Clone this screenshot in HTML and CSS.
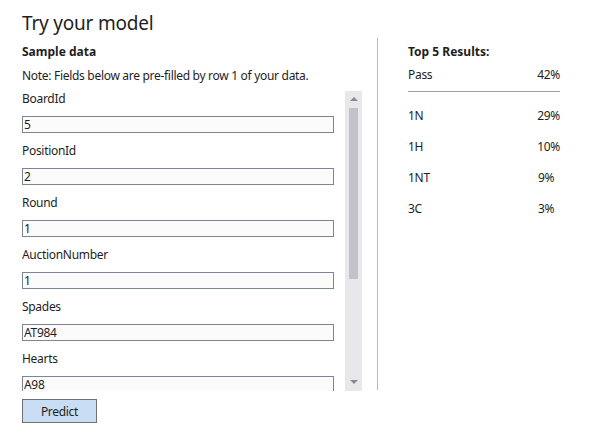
FILE: index.html
```html
<!DOCTYPE html>
<html lang="en">
<head>
<title>Try your model</title>
<meta charset="utf-8">
<link rel="stylesheet" href="styles.css">
</head>
<body>
	<div class="page">
		<div class="left">
			<h1 class="title">Try your model</h1>
			<h2 class="heading">Sample data</h2>
			<p class="note">Note: Fields below are pre-filled by row 1 of your data.</p>

			<div class="scroller">
				<div class="fields">
					<div class="field"><label>BoardId</label><input type="text" value="5"></div>
					<div class="field"><label>PositionId</label><input type="text" value="2"></div>
					<div class="field"><label>Round</label><input type="text" value="1"></div>
					<div class="field"><label>AuctionNumber</label><input type="text" value="1"></div>
					<div class="field"><label>Spades</label><input type="text" value="AT984"></div>
					<div class="field"><label>Hearts</label><input type="text" value="A98"></div>
				</div>
				<div class="scrollbar">
					<span class="arrow up"></span>
					<span class="thumb"></span>
					<span class="arrow down"></span>
				</div>
			</div>

			<button class="predict">Predict</button>
		</div>

		<div class="divider"></div>

		<div class="right">
			<h2 class="heading">Top 5 Results:</h2>
			<div class="row first"><span class="name">Pass</span><span class="pct">42%</span></div>
			<div class="row"><span class="name">1N</span><span class="pct">29%</span></div>
			<div class="row"><span class="name">1H</span><span class="pct">10%</span></div>
			<div class="row"><span class="name">1NT</span><span class="pct">9%</span></div>
			<div class="row"><span class="name">3C</span><span class="pct">3%</span></div>
		</div>
	</div>
</body>
</html>
```
FILE: styles.css
```css
body{
	margin: 0;
	background: #ffffff;
	color: #1e1e1e;
	font-family: "Noto Sans", "Open Sans", sans-serif;
	font-size: 12px;
	letter-spacing: -0.3px;
}
.page{
	display: flex;
	align-items: flex-start;
}

/* left column */
.left{
	width: 340px;
	padding-left: 22px;
	padding-top: 11px;
}
.title{
	margin: 0;
	font-size: 19px;
	font-weight: normal;
	line-height: 24px;
	letter-spacing: -0.2px;
}
.heading{
	margin: 9px 0 0 0;
	font-size: 12px;
	font-weight: bold;
	line-height: 16px;
	letter-spacing: 0;
}
.note{
	margin: 8px 0 0 0;
	line-height: 16px;
}
.scroller{
	display: flex;
	justify-content: space-between;
	height: 300px;
	margin-top: 7px;
}
.fields{
	width: 312px;
	overflow: hidden;
}
.field label{
	display: block;
	line-height: 16px;
	margin-bottom: 9px;
}
.field input{
	display: block;
	box-sizing: border-box;
	width: 312px;
	height: 17px;
	margin: 0 0 10px 0;
	padding: 0 1px;
	border: 1px solid #7a8599;
	background: #fbfbfb;
	color: #1e1e1e;
	font-family: inherit;
	font-size: 12px;
	letter-spacing: -0.3px;
	outline: none;
}

/* fake scrollbar */
.scrollbar{
	width: 17px;
	background: #e8e8ec;
	display: flex;
	flex-direction: column;
	align-items: center;
}
.arrow{
	width: 0;
	height: 0;
	border-left: 4px solid transparent;
	border-right: 4px solid transparent;
}
.arrow.up{
	margin-top: 6px;
	border-bottom: 4px solid #868999;
}
.arrow.down{
	margin-top: auto;
	margin-bottom: 7px;
	border-top: 4px solid #868999;
}
.thumb{
	width: 9px;
	height: 171px;
	margin-top: 7px;
	background: #c2c3c9;
}

.predict{
	display: block;
	margin-top: 8px;
	width: 75px;
	height: 24px;
	padding: 0;
	border: 1px solid #707070;
	background: #c9def5;
	color: #1e1e1e;
	font-family: inherit;
	font-size: 12px;
	letter-spacing: -0.3px;
}

.divider{
	width: 1px;
	height: 352px;
	margin: 38px 0 0 15px;
	background: #b9b9bd;
}

/* results */
.right{
	width: 152px;
	margin-left: 30px;
	padding-top: 35px;
}
.row{
	display: flex;
	line-height: 16px;
	margin-top: 15px;
}
.row .name{ width: 130px; }
.row.first{
	margin-top: 7px;
	padding-bottom: 8px;
	border-bottom: 1px solid #a0a0a0;
}
.row.first + .row{ margin-top: 16px; }
.row.first .pct{ margin-left: auto; }
```
